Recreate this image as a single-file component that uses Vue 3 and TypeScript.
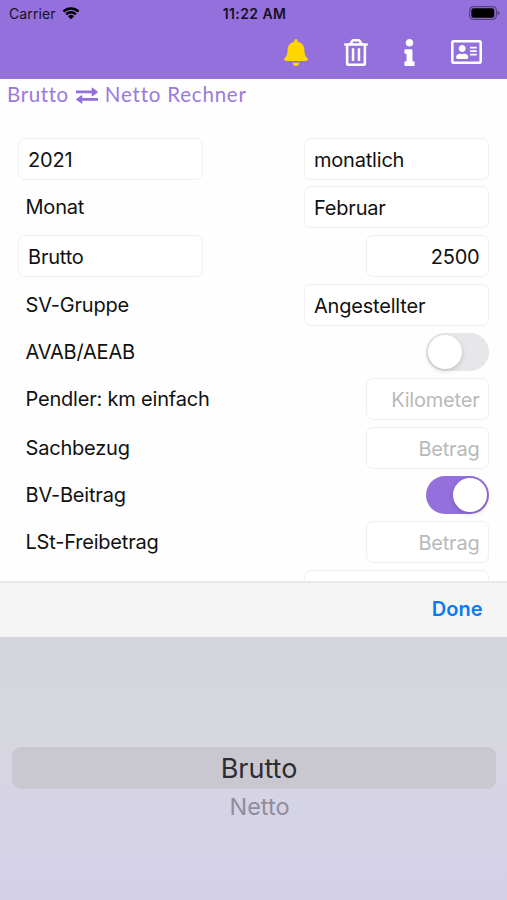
<script setup lang="ts">
import { ref } from 'vue'

interface Row {
  label?: string
  select?: string
  kind: 'select' | 'number' | 'toggle'
  value?: string
  placeholder?: string
  on?: boolean
}

const rows = ref<Row[]>([
  { select: '2021', kind: 'select', value: 'monatlich' },
  { label: 'Monat', kind: 'select', value: 'Februar' },
  { select: 'Brutto', kind: 'number', value: '2500' },
  { label: 'SV-Gruppe', kind: 'select', value: 'Angestellter' },
  { label: 'AVAB/AEAB', kind: 'toggle', on: false },
  { label: 'Pendler: km einfach', kind: 'number', placeholder: 'Kilometer' },
  { label: 'Sachbezug', kind: 'number', placeholder: 'Betrag' },
  { label: 'BV-Beitrag', kind: 'toggle', on: true },
  { label: 'LSt-Freibetrag', kind: 'number', placeholder: 'Betrag' },
  { label: 'Anzahl der Kinder', kind: 'select' },
])
</script>

<template>
  <div class="screen">
    <header class="top">
      <div class="status">
        <div class="carrier">
          <span>Carrier</span>
          <svg class="wifi" viewBox="0 0 18 14">
            <path d="M0.6 4.6a12 12 0 0 1 16.8 0l-1.7 1.8a9.6 9.6 0 0 0-13.4 0z" />
            <path d="M3.3 7.4a8.1 8.1 0 0 1 11.4 0L13 9.2a5.7 5.7 0 0 0-8 0z" />
            <path d="M6 10.2a4.3 4.3 0 0 1 6 0l-3 3.1z" />
          </svg>
        </div>
        <span class="time">11:22 AM</span>
        <svg class="battery" viewBox="0 0 31 14">
          <rect x="0.6" y="0.6" width="26.8" height="12.8" rx="4" fill="none" stroke="#000" stroke-opacity=".42" stroke-width="1.2" />
          <rect x="2.3" y="2.3" width="23" height="9.4" rx="2.2" fill="#000" />
          <path d="M28.6 4.7q2 .7 2 2.3t-2 2.3z" fill-opacity=".45" />
        </svg>
      </div>
      <nav class="actions">
        <svg class="bell" viewBox="0 0 448 512"><path d="M224 512c35.320 0 63.970-28.650 63.970-64H160.030c0 35.350 28.650 64 63.970 64zm215.390-149.710c-19.320-20.760-55.470-51.990-55.470-154.290 0-77.700-54.480-139.900-127.940-155.160V32c0-17.670-14.320-32-31.980-32s-31.980 14.330-31.980 32v20.840C118.560 68.100 64.080 130.300 64.080 208c0 102.300-36.150 133.530-55.470 154.290-6 6.450-8.660 14.160-8.610 21.710.11 16.400 12.980 32 32.100 32h383.800c19.120 0 32-15.600 32.100-32 .05-7.550-2.610-15.270-8.610-21.710z" /></svg>
        <svg class="trash" viewBox="0 0 448 512"><path d="M268 416h24a12 12 0 0 0 12-12V188a12 12 0 0 0-12-12h-24a12 12 0 0 0-12 12v216a12 12 0 0 0 12 12zM432 80h-82.410l-34-56.700A48 48 0 0 0 274.410 0H173.590a48 48 0 0 0-41.160 23.300L98.410 80H16A16 16 0 0 0 0 96v16a16 16 0 0 0 16 16h16v336a48 48 0 0 0 48 48h288a48 48 0 0 0 48-48V128h16a16 16 0 0 0 16-16V96a16 16 0 0 0-16-16zM171.840 50.910A6 6 0 0 1 177 48h94a6 6 0 0 1 5.150 2.910L293.610 80H154.390zM368 464H80V128h288zm-212-48h24a12 12 0 0 0 12-12V188a12 12 0 0 0-12-12h-24a12 12 0 0 0-12 12v216a12 12 0 0 0 12 12z" /></svg>
        <svg class="info" viewBox="0 0 192 512"><path d="M20 424.229h20V279.771H20c-11.046 0-20-8.954-20-20V212c0-11.046 8.954-20 20-20h112c11.046 0 20 8.954 20 20v212.229h20c11.046 0 20 8.954 20 20V492c0 11.046-8.954 20-20 20H20c-11.046 0-20-8.954-20-20v-47.771c0-11.046 8.954-20 20-20zM96 0C56.235 0 24 32.235 24 72s32.235 72 72 72 72-32.235 72-72S135.764 0 96 0z" /></svg>
        <svg class="card" viewBox="0 0 576 512"><path d="M528 32H48C21.500 32 0 53.500 0 80v352c0 26.500 21.500 48 48 48h480c26.500 0 48-21.500 48-48V80c0-26.500-21.500-48-48-48zm0 400H48V80h480v352zM208 256c35.300 0 64-28.700 64-64s-28.700-64-64-64-64 28.700-64 64 28.700 64 64 64zm-89.600 128h179.200c12.400 0 22.400-8.600 22.400-19.200v-19.200c0-31.800-30.100-57.600-67.200-57.600-10.800 0-18.700 8-44.800 8-26.900 0-33.400-8-44.800-8-37.100 0-67.200 25.800-67.200 57.600v19.200c0 10.600 10 19.200 22.400 19.200zM360 320h112c4.400 0 8-3.600 8-8v-16c0-4.400-3.600-8-8-8H360c-4.400 0-8 3.600-8 8v16c0 4.400 3.600 8 8 8zm0-64h112c4.400 0 8-3.600 8-8v-16c0-4.400-3.600-8-8-8H360c-4.400 0-8 3.600-8 8v16c0 4.400 3.600 8 8 8zm0-64h112c4.400 0 8-3.600 8-8v-16c0-4.400-3.600-8-8-8H360c-4.400 0-8 3.600-8 8v16c0 4.400 3.600 8 8 8z" /></svg>
      </nav>
    </header>

    <h1 class="title">
      <span>Brutto</span>
      <svg class="swap" viewBox="0 0 21 16">
        <path d="M0 3.200h15V.9q0-.9.800-.4l4.700 3.600q.7.700 0 1.300l-4.700 3.200q-.8.500-.8-.4V5.900H0zM21 10.300H6V8.100q0-.9-.8-.4L.5 11q-.8.700 0 1.400l4.700 3.300q.8.500.8-.4V13h15z" />
      </svg>
      <span>Netto Rechner</span>
    </h1>

    <main class="form">
      <div v-for="(row, i) in rows" :key="i" class="row">
        <div v-if="row.select" class="field wide">{{ row.select }}</div>
        <span v-else class="label">{{ row.label }}</span>
        <div v-if="row.kind === 'select'" class="field wide">{{ row.value }}</div>
        <div v-else-if="row.kind === 'number'" class="field small" :class="{ empty: !row.value }">{{ row.value ?? row.placeholder }}</div>
        <button v-else class="toggle" :class="{ on: row.on }" @click="row.on = !row.on"><i class="knob"></i></button>
      </div>
    </main>

    <section class="sheet">
      <div class="toolbar"><span class="done">Done</span></div>
      <div class="picker">
        <div class="option selected">Brutto</div>
        <div class="option next">Netto</div>
      </div>
    </section>
  </div>
</template>

<style>
body { margin: 0; background: #fff; }
</style>

<style scoped>
.screen {
  width: 507px;
  height: 900px;
  overflow: hidden;
  display: flex;
  flex-direction: column;
  background: #fefefe;
  color: #111;
  font-family: Inter, "Liberation Sans", sans-serif;
}
.top { height: 79px; flex: none; background: #9370db; color: #15101f; }
.status {
  height: 27px;
  display: grid;
  grid-template-columns: 1fr auto 1fr;
  align-items: center;
  padding: 0 7px 0 9px;
  font-size: 14px;
}
.carrier { display: flex; align-items: center; gap: 6px; letter-spacing: 0.1px; }
.wifi { width: 18px; height: 14px; margin-top: -2px; }
.time { font-weight: 600; font-size: 14px; letter-spacing: 0.4px; }
.battery { width: 31px; height: 14px; justify-self: end; margin-top: -1px; }
.actions { display: flex; height: 50px; align-items: center; padding-left: 284px; fill: #fff; }
.actions svg { height: 27px; flex: none; }
.bell { width: 24px; fill: #ffd700; }
.trash { width: 24px; margin-left: 36px; }
.info { width: 11px; margin-left: 36px; }
.actions .card { width: 31px; height: 28px; margin-left: 36px; }
.title {
  margin: 0;
  height: 30px;
  flex: none;
  display: flex;
  align-items: center;
  padding-left: 7px;
  color: #9a7add;
  font: 400 20.5px/30px Lato, sans-serif;
  letter-spacing: 0.6px;
}
.title span:last-child { letter-spacing: 0.8px; }
.swap { width: 22px; height: 17px; margin: 3px 7px 0 7px; fill: #9370db; }
.form {
  flex: 1;
  min-height: 0;
  overflow: hidden;
  display: flex;
  flex-direction: column;
  gap: 6.9px;
  padding: 28.5px 18px 0;
  margin-bottom: -2px;
}
.row { display: flex; flex: none; justify-content: space-between; align-items: center; font-size: 20px; }
.label { padding-left: 7.5px; line-height: 37px; margin-top: 1px; letter-spacing: -0.2px; }
.field {
  box-sizing: border-box;
  height: 42px;
  border: 1.5px solid #f0f0f0;
  border-radius: 7px;
  line-height: 42px;
  padding: 0 9px;
  background: #fff;
  letter-spacing: -0.2px;
}
.wide { width: 185px; }
.small { width: 123px; text-align: right; padding-right: 8.5px; }
.empty { color: #b9b9b9; }
.toggle {
  width: 63px;
  height: 38.2px;
  border: 0;
  border-radius: 20px;
  padding: 2px;
  background: #e7e7e9;
  display: flex;
}
.toggle.on { background: #9370db; justify-content: flex-end; }
.knob { width: 34px; height: 34px; border-radius: 50%; background: #fff; box-shadow: 0 2px 5px rgba(0, 0, 0, 0.17); }
.sheet { position: relative; height: 319px; flex: none; display: flex; flex-direction: column; }
.toolbar {
  box-sizing: border-box;
  height: 56px;
  border-top: 2px solid rgba(229, 229, 229, 0.85);
  background: #f5f5f5;
  background-clip: padding-box;
  display: flex;
  align-items: center;
  justify-content: flex-end;
  padding: 0 24.5px 2px 0;
}
.done { color: #0a7aee; font-size: 20px; font-weight: 600; }
.picker { flex: 1; padding: 110px 11px 0 12px; background: linear-gradient(#d3d5dc, #d7d7df 40%, #d5d3e6 65%, #d5d0e9); }
.option { text-align: center; }
.selected { height: 42px; border-radius: 9px; background: #c9c8d1; font-size: 27px; line-height: 43px; color: #2c2c32; padding-left: 10px; box-sizing: border-box; }
.next { font-size: 23.5px; line-height: 35px; color: #8f8d9b; padding-left: 11px; }
</style>
